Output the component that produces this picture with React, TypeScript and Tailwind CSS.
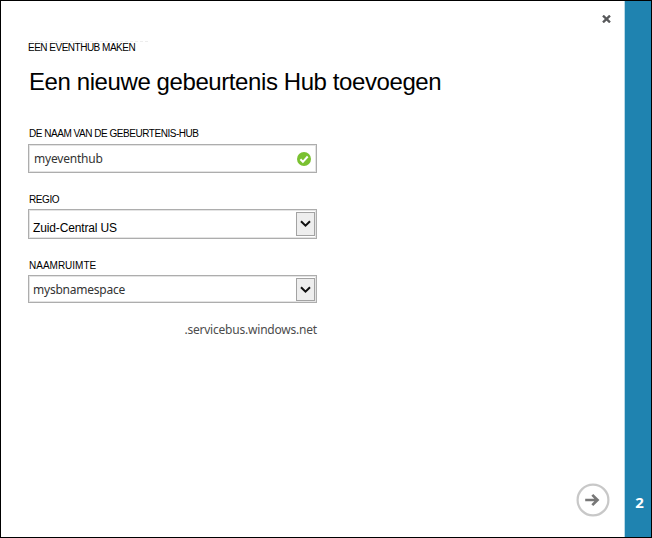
import type { ReactNode } from "react";

const label =
  "h-3 whitespace-nowrap text-[10px] leading-3 text-black font-['Liberation_Sans',Arial,sans-serif]";
const humanist = "font-['Noto_Sans','Open_Sans',sans-serif]";
const field = "flex w-[289px] justify-between border border-[#adadad] bg-white shadow-[inset_0_0_0_1px_#e4e4e4]";

function SelectBox({ children, height, button }: { children: ReactNode; height: string; button: string }) {
  return (
    <div className={`${field} items-start pl-1 pr-px pt-0.5 ${height}`}>
      {children}
      <span
        className={`flex w-[19px] items-center justify-center border border-[#a3a3a3] bg-[#eeeeee] ${button}`}
      >
        <svg width="11" height="8" viewBox="0 0 11 8" fill="none">
          <path d="M1 1.2 5.5 5.7 10 1.2" stroke="#111" strokeWidth="2" />
        </svg>
      </span>
    </div>
  );
}

export default function App() {
  return (
    <div className="flex h-[538px] w-[652px] overflow-hidden border border-black bg-white">
      <main className="flex min-w-0 flex-1 flex-col pl-[27px]">
        <div className="flex h-10 justify-end pr-[13px] pt-[14px]">
          <svg width="9" height="8" viewBox="0 0 9 8" fill="none">
            <path d="m1 .6 7 6.8M8 .6 1 7.4" stroke="#58595b" strokeWidth="2.3" />
          </svg>
        </div>
        <div className="ml-0.5 h-px w-[118px] border-t border-dashed border-[#ededed]" />
        <p className={`${label} tracking-[-0.5px]`}>EEN EVENTHUB MAKEN</p>
        <h1 className="mt-[14px] h-7 whitespace-nowrap pl-px text-[24px] leading-7 tracking-[-0.41px] text-black font-['Liberation_Sans',Arial,sans-serif]">
          Een nieuwe gebeurtenis Hub toevoegen
        </h1>
        <p className={`${label} mt-8 pl-px tracking-[-0.47px]`}>DE NAAM VAN DE GEBEURTENIS-HUB</p>
        <div className={`${field} mt-1 h-[29px] items-center pl-[5px] pr-[5px]`}>
          <span className={`text-[12px] leading-4 tracking-[-0.2px] text-[#333] ${humanist}`}>myeventhub</span>
          <svg width="14" height="14" viewBox="0 0 14 14" fill="none">
            <circle cx="7" cy="7" r="7" fill="#7ac131" />
            <path d="m3.4 7.2 2.5 2.6 4.8-5.3" stroke="#fff" strokeWidth="2" />
          </svg>
        </div>
        <p className={`${label} mt-[21px] pl-px tracking-[-0.4px]`}>REGIO</p>
        <div className="mt-[3px]">
          <SelectBox height="h-[30px]" button="h-6">
            <span className="pt-2 text-[12px] leading-4 tracking-[-0.14px] text-black font-['Liberation_Sans',Arial,sans-serif]">
              Zuid-Central US
            </span>
          </SelectBox>
        </div>
        <p className={`${label} mt-[21px] pl-px`}>NAAMRUIMTE</p>
        <div className="mt-[3px]">
          <SelectBox height="h-7" button="h-[23px]">
            <span className={`pt-1 text-[12px] leading-4 tracking-[-0.22px] text-[#333] ${humanist}`}>
              mysbnamespace
            </span>
          </SelectBox>
        </div>
        <p
          className={`mt-[19px] w-[289px] text-right text-[12px] leading-4 tracking-[-0.21px] text-[#4c4c4c] ${humanist}`}
        >
          .servicebus.windows.net
        </p>
        <div className="mt-auto flex justify-end pb-[20px] pr-[14px]">
          <svg width="34" height="34" viewBox="0 0 34 34" fill="none">
            <circle cx="17" cy="17" r="15.4" stroke="#c8c8c8" strokeWidth="2.2" />
            <path d="M9.2 17H22M16.3 11.9l5.2 5.1-5.2 5.1" stroke="#777" strokeWidth="2.7" />
          </svg>
        </div>
      </main>
      <aside className="flex w-[27px] items-end justify-center border-l border-[#b9d9e7] bg-[#1f83b0] pb-[25px] pl-[3px]">
        <span className={`text-[15px] font-bold leading-5 text-white ${humanist}`}>2</span>
      </aside>
    </div>
  );
}
